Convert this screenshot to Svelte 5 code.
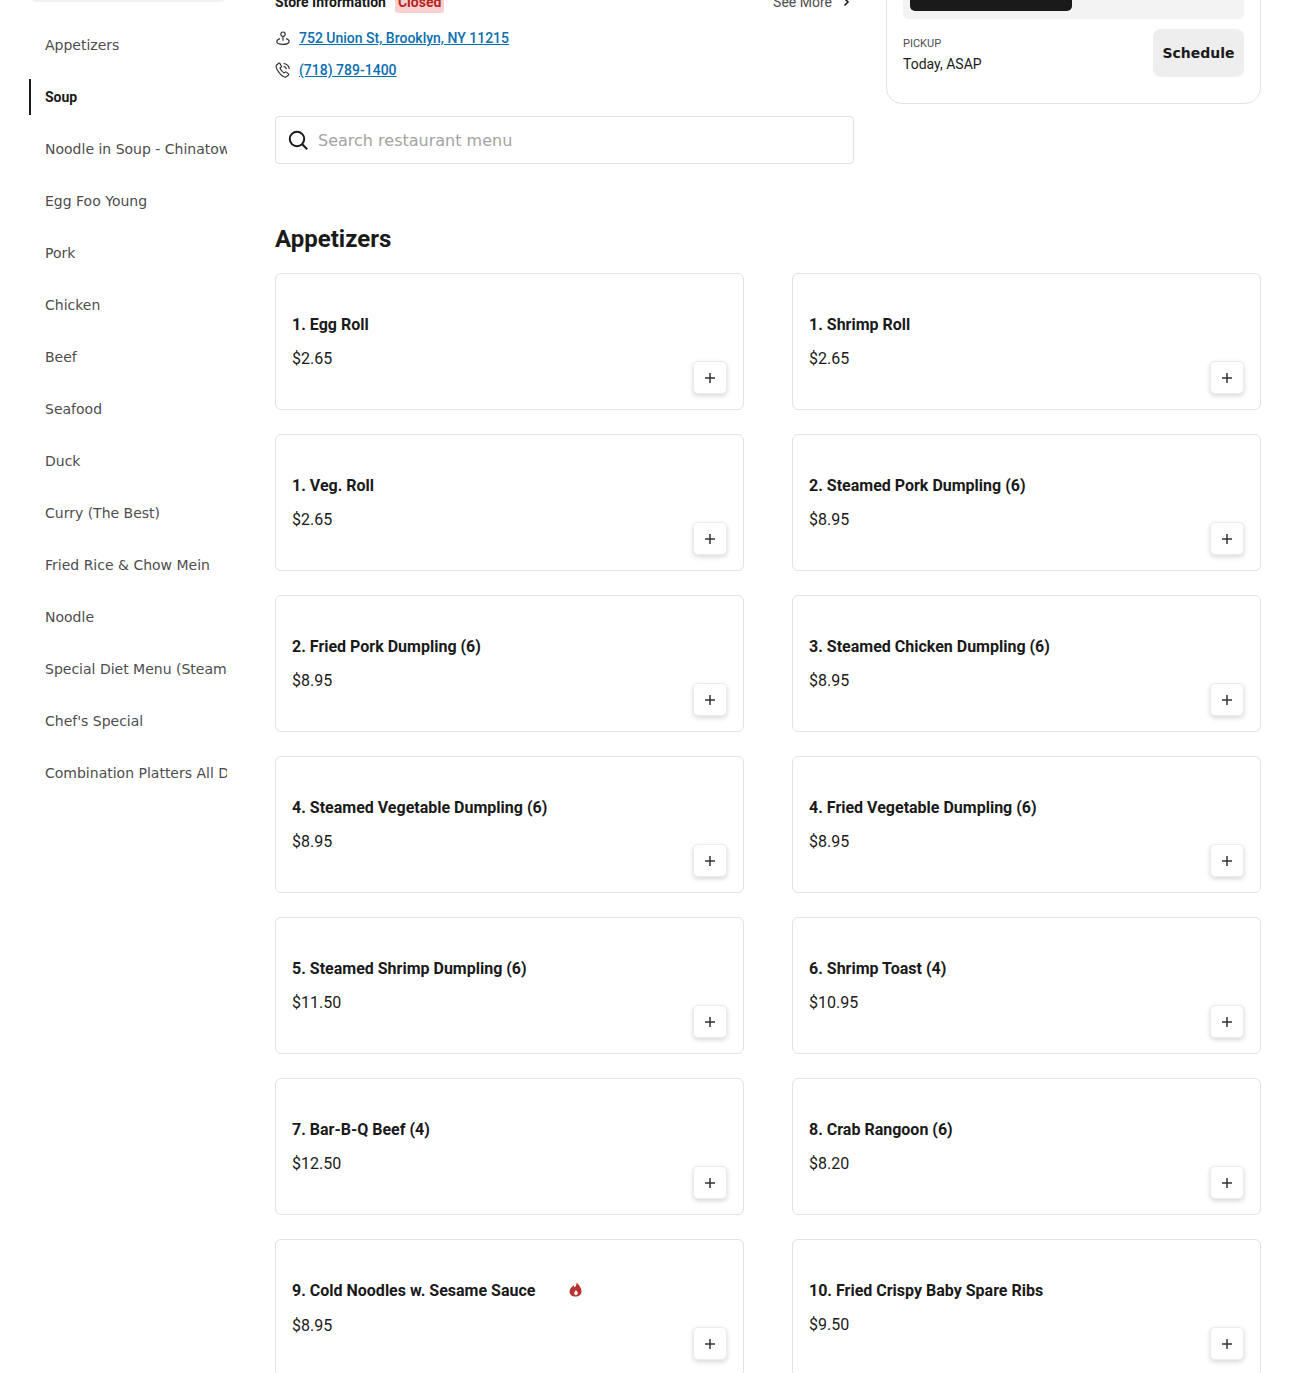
<script>
  const categories = [
    'Appetizers', 'Soup', 'Noodle in Soup - Chinatown Style', 'Egg Foo Young', 'Pork', 'Chicken', 'Beef',
    'Seafood', 'Duck', 'Curry (The Best)', 'Fried Rice & Chow Mein', 'Noodle',
    'Special Diet Menu (Steamed)', "Chef's Special", 'Combination Platters All Day'
  ];

  const items = [
    { name: '1. Egg Roll', price: '$2.65' },
    { name: '1. Shrimp Roll', price: '$2.65' },
    { name: '1. Veg. Roll', price: '$2.65' },
    { name: '2. Steamed Pork Dumpling (6)', price: '$8.95' },
    { name: '2. Fried Pork Dumpling (6)', price: '$8.95' },
    { name: '3. Steamed Chicken Dumpling (6)', price: '$8.95' },
    { name: '4. Steamed Vegetable Dumpling (6)', price: '$8.95' },
    { name: '4. Fried Vegetable Dumpling (6)', price: '$8.95' },
    { name: '5. Steamed Shrimp Dumpling (6)', price: '$11.50' },
    { name: '6. Shrimp Toast (4)', price: '$10.95' },
    { name: '7. Bar-B-Q Beef (4)', price: '$12.50' },
    { name: '8. Crab Rangoon (6)', price: '$8.20' },
    { name: '9. Cold Noodles w. Sesame Sauce', price: '$8.95', spicy: true },
    { name: '10. Fried Crispy Baby Spare Ribs', price: '$9.50' }
  ];
</script>

<div class="viewport">
  <div class="page">
    <aside class="sidebar">
      <div class="side-search"></div>
      <nav class="cats">
        {#each categories as cat}
          <div class="cat" class:active={cat === 'Soup'}><span>{cat}</span></div>
        {/each}
      </nav>
    </aside>

    <main class="main">
      <div class="top">
        <div class="info">
          <div class="info-head">
            <div class="info-title">
              <strong>Store Information</strong>
              <span class="closed">Closed</span>
            </div>
            <div class="see-more">
              See More
              <svg width="14" height="14" viewBox="0 0 14 14" fill="none" stroke="#1a1a1a" stroke-width="1.6"><path d="M5.5 3.5 9 7l-3.5 3.5" /></svg>
            </div>
          </div>
          <div class="contact">
            <svg width="16" height="16" viewBox="0 0 16 16" fill="none" stroke="#333" stroke-width="1.2">
              <circle cx="8" cy="4.2" r="2.2" />
              <path d="M8 6.4v4.4" />
              <path d="M5 8.6C3 9.2 1.8 10.2 1.8 11.6c0 1.6 2.6 2.8 6.2 2.8s6.2-1.2 6.2-2.8c0-1.400-1.200-2.400-3.200-3" />
            </svg>
            <a href="#top">752 Union St, Brooklyn, NY 11215</a>
          </div>
          <div class="contact">
            <svg width="16" height="16" viewBox="0 0 16 16" fill="none" stroke="#333" stroke-width="1.2">
              <path d="M3.800 1.300 1.700 2.900C.8 3.800 1.200 6.800 3.900 10.400c2.700 3.400 5.700 5 7.100 4.500l2.300-1.600c.5-.4.5-1 .1-1.400l-2-1.800c-.4-.4-.9-.4-1.300 0l-1 .8C7.500 10 5.700 7.800 5 6.200l1-.9c.4-.3.500-.8.300-1.200L5.100 1.700C4.800 1.100 4.300 1 3.800 1.300z" />
              <path d="M8.500 1.500c3 .3 5.300 2.500 5.800 5.500M8.500 4.300c1.500.2 2.700 1.300 3 2.800" />
            </svg>
            <a href="#top">(718) 789-1400</a>
          </div>
          <div class="search">
            <svg width="22" height="22" viewBox="0 0 22 22" fill="none" stroke="#1a1a1a" stroke-width="2"><circle cx="10" cy="10" r="7.200" /><path d="m15.200 15.200 5 5" /></svg>
            <span>Search restaurant menu</span>
          </div>
        </div>

        <div class="order">
          <div class="toggle"><div class="toggle-on"></div></div>
          <div class="pickup">
            <div class="pickup-text">
              <div class="pickup-label">PICKUP</div>
              <div class="pickup-time">Today, ASAP</div>
            </div>
            <div class="schedule">Schedule</div>
          </div>
        </div>
      </div>

      <h2>Appetizers</h2>
      <div class="grid">
        {#each items as item}
          <div class="card">
            <div class="name-row" class:spicy={item.spicy}>
              <span class="name">{item.name}</span>
              {#if item.spicy}
                <svg class="flame" width="15" height="15" viewBox="0 0 15 15" fill="#b8322f">
                  <path d="M8.500.5c.4 2.300-.9 3.700-1.800 5C6.100 4.800 5.900 4 5.800 3.200 3.300 5 1.500 7 1.500 9.400c0 3 2.500 5.100 6 5.100s6-2.100 6-5.100C13.500 5.900 10.800 2.800 8.500.5zm-.6 12.800c-1-.3-1.700-1-1.700-2 0-1.200.9-2 1.600-3.300 1.100 1 2 2 2 3.300 0 1-.9 1.700-1.900 2z" />
                </svg>
              {/if}
            </div>
            <div class="price">{item.price}</div>
            <div class="add">
              <svg width="10" height="10" viewBox="0 0 10 10" stroke="#333" stroke-width="1.500"><path d="M5 0v10M0 5h10" /></svg>
            </div>
          </div>
        {/each}
      </div>
    </main>
  </div>
</div>

<style>
  :global(body) {
    margin: 0;
    background: #fff;
    color: #1a1a1a;
    font-family: Roboto, sans-serif;
  }

  .viewport {
    height: 1373px;
    overflow: hidden;
  }

  .page {
    display: flex;
    margin-top: -46px;
    padding-left: 29px;
    padding-right: 29px;
  }

  .sidebar {
    width: 199px;
    flex: none;
    margin-right: 47px;
  }

  .side-search {
    height: 48px;
    border-radius: 8px;
    background: #f1f1f1;
  }

  .cats {
    padding-top: 25px;
    width: 198px;
    overflow: hidden;
  }

  .cat {
    height: 36px;
    margin-bottom: 16px;
    display: flex;
    align-items: center;
    padding-left: 16px;
    font-family: 'DejaVu Sans', sans-serif;
    font-size: 14px;
    color: #4d4d4d;
    white-space: nowrap;
    overflow: hidden;
    box-sizing: border-box;
  }

  .cat.active {
    border-left: 2px solid #1a1a1a;
    padding-left: 14px;
    font-family: Roboto, sans-serif;
    font-weight: 700;
    color: #1a1a1a;
  }

  .main {
    flex: 1;
    min-width: 0;
  }

  .top {
    display: flex;
    gap: 32px;
    align-items: flex-start;
  }

  .info {
    width: 579px;
    flex: none;
    padding-top: 38px;
  }

  .info-head {
    display: flex;
    justify-content: space-between;
    align-items: center;
    height: 20px;
    margin-bottom: 16px;
  }

  .info-title {
    display: flex;
    align-items: center;
    gap: 9px;
    font-size: 14px;
  }

  .closed {
    background: #f8d0cf;
    color: #b3261e;
    font-weight: 700;
    font-size: 14px;
    line-height: 18px;
    padding: 0 3px 2px;
    margin-top: 2px;
    border-radius: 3px;
  }

  .see-more {
    display: flex;
    align-items: center;
    gap: 7px;
    margin-right: 1px;
    font-size: 14px;
    color: #4d4d4d;
  }

  .contact {
    display: flex;
    align-items: center;
    gap: 8px;
    height: 20px;
    margin-bottom: 12px;
    font-size: 14px;
    font-weight: 500;
  }

  .contact a {
    color: #0a6eb0;
    text-decoration: underline;
  }

  .search {
    margin-top: 36px;
    height: 48px;
    box-sizing: border-box;
    border: 1px solid #e0e0e0;
    border-radius: 4px;
    display: flex;
    align-items: center;
    gap: 9px;
    padding-left: 11px;
    font-family: 'DejaVu Sans', sans-serif;
    font-size: 16px;
    color: #a3a3a3;
  }

  .order {
    flex: 1;
    height: 150px;
    box-sizing: border-box;
    border: 1px solid #e2e2e2;
    border-radius: 16px;
    padding: 0 16px;
    display: flex;
    flex-direction: column;
    justify-content: flex-end;
    padding-bottom: 26px;
  }

  .toggle {
    height: 19px;
    background: #f3f3f3;
    border-radius: 0 0 6px 6px;
    padding: 0 7px 8px;
    margin-bottom: 10px;
    box-sizing: border-box;
  }

  .toggle-on {
    width: 162px;
    height: 100%;
    background: #1a1a1a;
    border-radius: 0 0 5px 5px;
  }

  .pickup {
    display: flex;
    justify-content: space-between;
    align-items: center;
  }

  .pickup-text {
    padding-top: 2px;
  }

  .pickup-label {
    font-size: 11px;
    color: #4d4d4d;
    margin-bottom: 6px;
  }

  .pickup-time {
    font-size: 14px;
  }

  .schedule {
    width: 91px;
    height: 48px;
    background: #eeeeee;
    border-radius: 8px;
    display: flex;
    align-items: center;
    justify-content: center;
    font-family: 'DejaVu Sans', sans-serif;
    font-weight: 700;
    font-size: 14px;
  }

  h2 {
    margin: 0;
    padding-top: 59px;
    height: 109px;
    box-sizing: border-box;
    font-size: 24px;
    line-height: 32px;
    font-weight: 700;
  }

  .grid {
    display: grid;
    grid-template-columns: 469px 469px;
    column-gap: 48px;
    row-gap: 24px;
  }

  .card {
    position: relative;
    height: 137px;
    box-sizing: border-box;
    border: 1px solid #e2e2e2;
    border-radius: 6px;
    padding: 41px 16px 0;
  }

  .name-row {
    display: flex;
    align-items: center;
    gap: 33px;
    height: 20px;
    margin-bottom: 13px;
  }

  .name-row.spicy {
    margin-bottom: 14px;
  }

  .name {
    font-size: 16px;
    font-weight: 700;
    line-height: 20px;
  }

  .flame {
    margin-top: -4px;
  }

  .price {
    font-size: 16px;
    line-height: 22px;
  }

  .add {
    position: absolute;
    right: 16px;
    bottom: 15px;
    width: 34px;
    height: 33px;
    box-sizing: border-box;
    border: 1px solid #ececec;
    border-radius: 5px;
    background: #fff;
    box-shadow: 0 2px 5px rgba(0, 0, 0, 0.16);
    display: flex;
    align-items: center;
    justify-content: center;
  }
</style>
